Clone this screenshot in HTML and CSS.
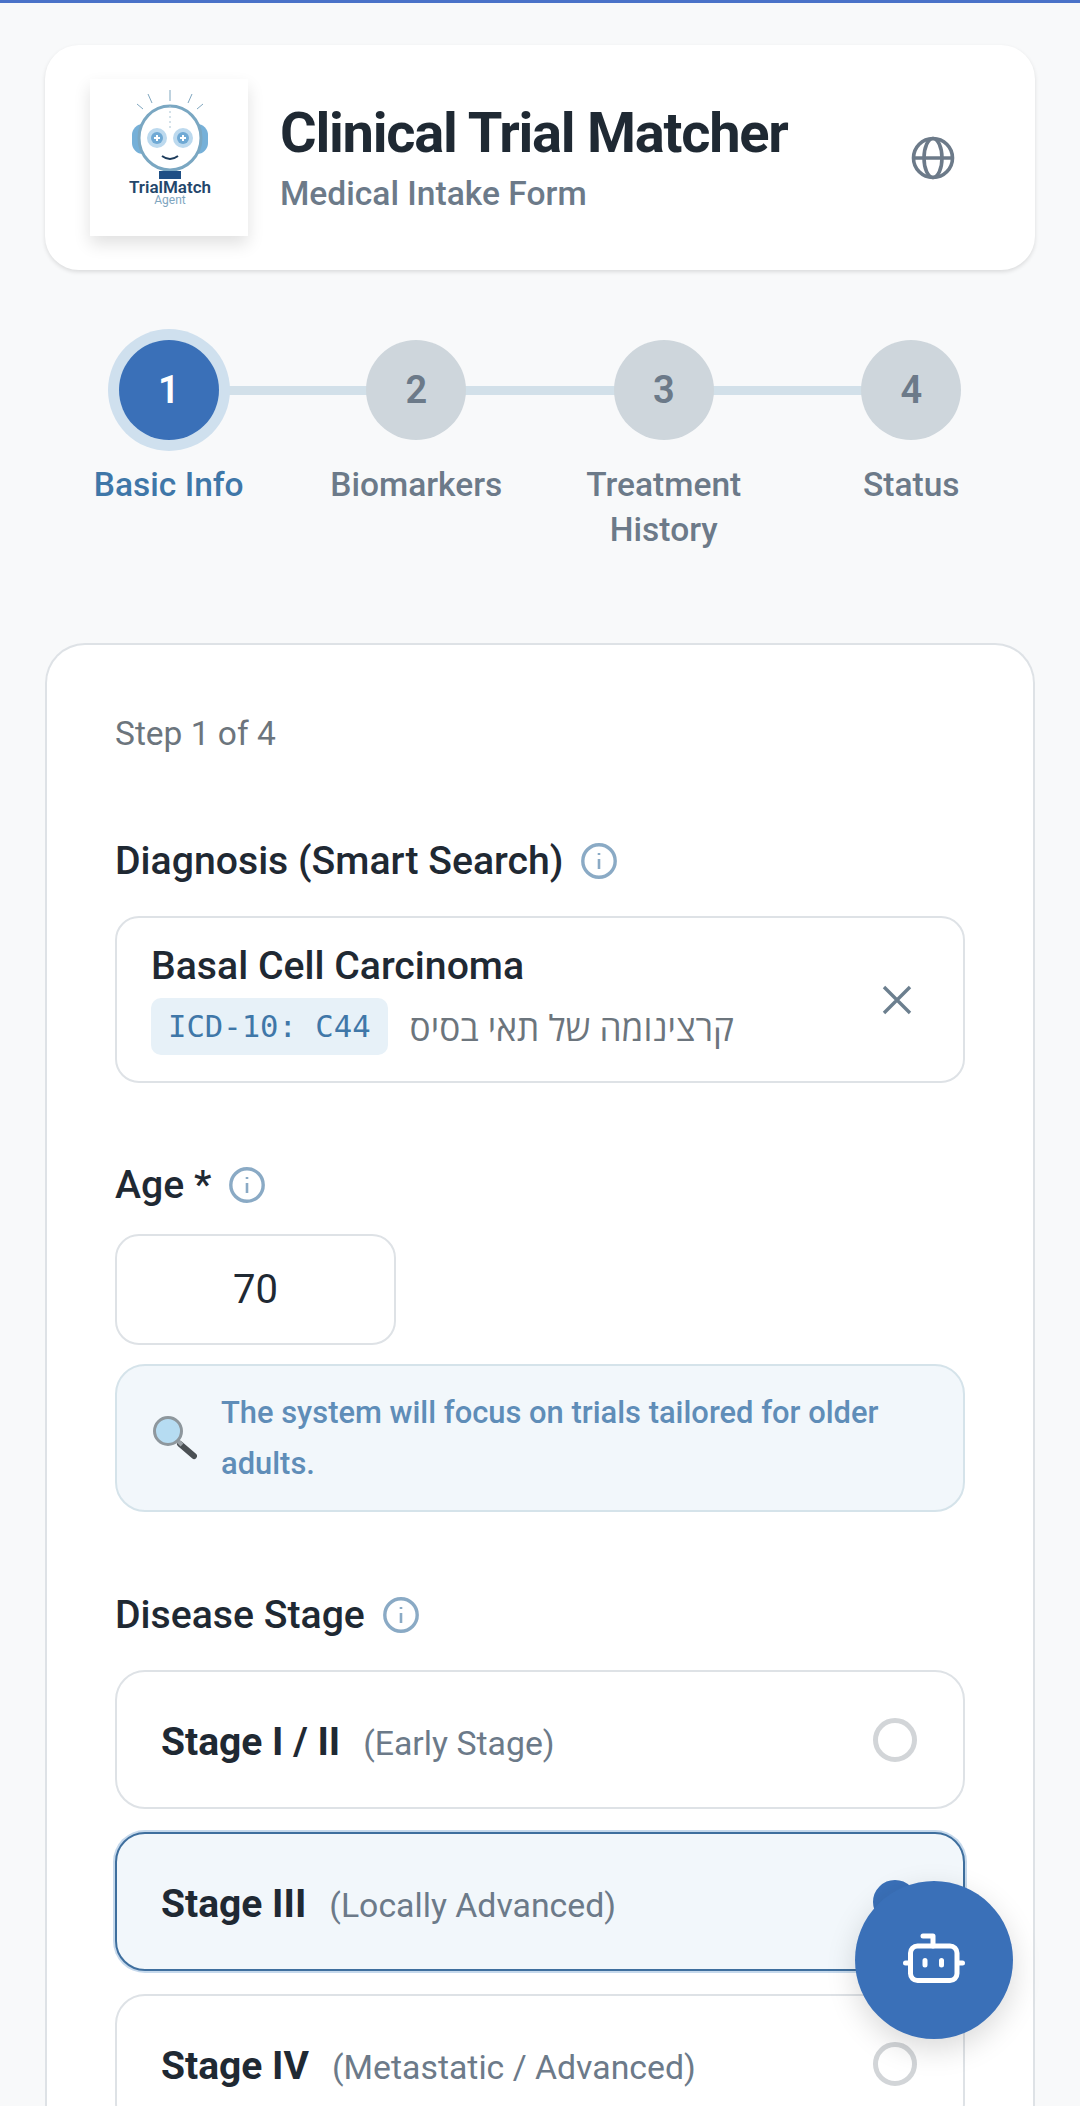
FILE: index.html
```html
<!DOCTYPE html>
<html lang="en">
<head>
    <meta charset="UTF-8">
    <meta name="viewport" content="width=device-width, initial-scale=1.0">
    <title>Clinical Trial Matcher</title>
    <link rel="stylesheet" href="styles.css">
</head>
<body>
    <header class="top-card">
        <div class="logo">
            <svg width="158" height="157" viewBox="0 0 158 157">
                <g stroke="#7fa6bf" stroke-width="1" fill="none">
                    <path d="M80 11V22M58 15L62 24M102 15L98 24M47 25L53 30M113 25L107 30"/>
                </g>
                <rect x="42" y="45" width="76" height="30" rx="11" fill="#76b0d8"/>
                <ellipse cx="80" cy="59" rx="31" ry="32" fill="#fff" stroke="#7aa7c2" stroke-width="3"/>
                <path d="M80 27V50" stroke="#a9c4d4" stroke-width="1" stroke-dasharray="2 3"/>
                <circle cx="67" cy="59" r="10" fill="#bcd9ee"/>
                <circle cx="93" cy="59" r="10" fill="#bcd9ee"/>
                <circle cx="67" cy="59" r="6" fill="#6fa9d4"/>
                <circle cx="93" cy="59" r="6" fill="#6fa9d4"/>
                <path d="M64 59H70M67 56V62M90 59H96M93 56V62" stroke="#fff" stroke-width="2"/>
                <path d="M72 77Q80 83 88 77" stroke="#1d3c5c" stroke-width="2" fill="none"/>
                <rect x="69" y="92" width="22" height="8" fill="#1f4f85"/>
                <text x="80" y="114" class="logo-name" text-anchor="middle">TrialMatch</text>
                <text x="80" y="125" class="logo-sub" text-anchor="middle">Agent</text>
            </svg>
        </div>
        <div class="top-text">
            <h1>Clinical Trial Matcher</h1>
            <p>Medical Intake Form</p>
        </div>
        <svg class="globe" width="44" height="44" viewBox="0 0 44 44" fill="none" stroke="#6c7a89" stroke-width="3.6">
            <circle cx="22" cy="22" r="19.5"/>
            <ellipse cx="22" cy="22" rx="9" ry="19.5"/>
            <path d="M3 22H41"/>
        </svg>
    </header>

    <div class="stepper">
        <div class="step active"><div class="step-num">1</div><div class="step-label">Basic Info</div></div>
        <div class="step"><div class="step-num">2</div><div class="step-label">Biomarkers</div></div>
        <div class="step"><div class="step-num">3</div><div class="step-label">Treatment History</div></div>
        <div class="step"><div class="step-num">4</div><div class="step-label">Status</div></div>
    </div>

    <main class="form-card">
        <div class="step-count">Step 1 of 4</div>

        <div class="field-label">
            <span>Diagnosis (Smart Search)</span>
            <svg class="info" width="36" height="36" viewBox="0 0 36 36" fill="none" stroke="#8aaac5" stroke-width="3.4"><circle cx="18" cy="18" r="16.2"/><path d="M18 16V26M18 10V12" stroke-width="2.6"/></svg>
        </div>
        <div class="selected-box">
            <div class="selected-text">
                <div class="selected-name">Basal Cell Carcinoma</div>
                <div class="selected-meta">
                    <span class="code-chip">ICD-10: C44</span>
                    <span class="hebrew" dir="rtl" lang="he">קרצינומה של תאי בסיס</span>
                </div>
            </div>
            <svg width="32" height="32" viewBox="0 0 32 32" stroke="#6c7f8f" stroke-width="3.4" fill="none"><path d="M3 3L29 29M29 3L3 29"/></svg>
        </div>

        <div class="field-label age-label">
            <span>Age *</span>
            <svg class="info" width="36" height="36" viewBox="0 0 36 36" fill="none" stroke="#8aaac5" stroke-width="3.4"><circle cx="18" cy="18" r="16.2"/><path d="M18 16V26M18 10V12" stroke-width="2.6"/></svg>
        </div>
        <div class="age-input">70</div>
        <div class="note-box">
            <svg class="note-icon" width="44" height="44" viewBox="0 0 44 44">
                <path d="M27 28L41 40" stroke="#4b5054" stroke-width="6" stroke-linecap="round"/>
                <path d="M24 24L29 29" stroke="#9aa1a6" stroke-width="4"/>
                <circle cx="15" cy="15" r="13.5" fill="#b6dcf2" stroke="#8e979d" stroke-width="3"/>
            </svg>
            <p>The system will focus on trials tailored for older adults.</p>
        </div>

        <div class="field-label stage-label">
            <span>Disease Stage</span>
            <svg class="info" width="36" height="36" viewBox="0 0 36 36" fill="none" stroke="#8aaac5" stroke-width="3.4"><circle cx="18" cy="18" r="16.2"/><path d="M18 16V26M18 10V12" stroke-width="2.6"/></svg>
        </div>
        <div class="stage-list">
            <div class="stage-option">
                <div class="stage-text"><b>Stage I / II</b><span>(Early Stage)</span></div>
                <div class="radio"></div>
            </div>
            <div class="stage-option selected">
                <div class="stage-text"><b>Stage III</b><span>(Locally Advanced)</span></div>
                <div class="radio"></div>
            </div>
            <div class="stage-option">
                <div class="stage-text"><b>Stage IV</b><span>(Metastatic / Advanced)</span></div>
                <div class="radio"></div>
            </div>
        </div>
    </main>

    <button class="chat-fab">
        <svg width="62" height="52" viewBox="0 0 62 52" fill="none" stroke="#fff" stroke-width="5" stroke-linecap="round" stroke-linejoin="round">
            <rect x="7.5" y="13" width="46.5" height="34.5" rx="7"/>
            <path d="M30 13V3H20M2.5 30H6M55.5 30H59.5M22 27.5V32M38.5 27.5V32"/>
        </svg>
    </button>
</body>
</html>
```

FILE: styles.css
```css
html, body {
    height: 2106px;
    overflow: hidden;
}

body {
    margin: 0;
    padding: 45px 45px 0;
    box-sizing: border-box;
    background-color: #f8f9fa;
    border-top: 3px solid #4a72c8;
    font-family: Roboto, "Open Sans", sans-serif;
    color: #1f2933;
}

.top-card {
    display: flex;
    align-items: center;
    height: 225px;
    margin-top: -3px;
    padding: 0 80px 0 45px;
    box-sizing: border-box;
    background-color: #fff;
    border-radius: 34px;
    box-shadow: 0 2px 4px rgba(0, 0, 0, 0.12);
}

.logo {
    width: 158px;
    height: 157px;
    flex: none;
    background-color: #fff;
    box-shadow: 0 8px 16px rgba(0, 0, 0, 0.12);
}

.logo-name {
    font-size: 17px;
    font-weight: 600;
    fill: #23466b;
}

.logo-sub {
    font-size: 12px;
    fill: #7fa6bf;
}

.top-text {
    flex: 1;
    margin-left: 32px;
}

.top-text h1 {
    margin: 0;
    font-size: 56px;
    font-weight: 700;
    letter-spacing: -1.25px;
    line-height: 64px;
}

.top-text p {
    margin: 9px 0 0;
    font-size: 33.6px;
    font-weight: 500;
    line-height: 40px;
    color: #6c7a89;
}

.stepper {
    display: flex;
    margin-top: 70px;
}

.step {
    position: relative;
    flex: 1;
    display: flex;
    flex-direction: column;
    align-items: center;
}

.step:not(:last-child)::after {
    content: "";
    position: absolute;
    top: 46px;
    left: 50%;
    width: 100%;
    height: 9px;
    background-color: #d2e0e9;
}

.step-num {
    position: relative;
    z-index: 1;
    width: 100px;
    height: 100px;
    border-radius: 50%;
    background-color: #ced6dc;
    color: #6c7a89;
    font-size: 38px;
    font-weight: 600;
    line-height: 100px;
    text-align: center;
}

.step-label {
    margin-top: 22px;
    width: 200px;
    font-size: 33.5px;
    font-weight: 500;
    line-height: 45px;
    text-align: center;
    color: #6c7a89;
}

.step.active .step-num {
    background-color: #3a70b8;
    color: #fff;
    box-shadow: 0 0 0 11px #cfe0ee;
}

.step.active .step-label {
    color: #3f77a8;
}

/* runs past the bottom of the window, so no bottom border */
.form-card {
    margin-top: 91px;
    padding: 68px 68px 0;
    height: 1396px;
    background-color: #fff;
    border: 2px solid #dee2e6;
    border-bottom: none;
    border-radius: 40px 40px 0 0;
    overflow: hidden;
}

.step-count {
    font-size: 33.5px;
    line-height: 42px;
    color: #6c757d;
}

.field-label {
    display: flex;
    align-items: center;
    gap: 18px;
    margin-top: 84px;
    font-size: 39.2px;
    font-weight: 500;
    line-height: 44px;
}

.selected-box {
    display: flex;
    align-items: center;
    justify-content: space-between;
    height: 167px;
    margin-top: 33px;
    padding: 0 50px 0 34px;
    box-sizing: border-box;
    border: 2px solid #dee2e6;
    border-radius: 24px;
}

.selected-name {
    font-size: 39.2px;
    font-weight: 500;
    line-height: 44px;
}

.selected-meta {
    display: flex;
    align-items: center;
    gap: 22px;
    margin-top: 10px;
}

.code-chip {
    padding: 0 17px;
    height: 57px;
    line-height: 57px;
    border-radius: 10px;
    background-color: #e7f1f8;
    color: #3f77a8;
    font-family: "DejaVu Sans Mono", monospace;
    font-size: 30.6px;
}

.hebrew {
    font-family: "Open Sans", "Noto Sans", "DejaVu Sans", sans-serif;
    font-size: 35.2px;
    color: #6c757d;
}

.age-label {
    margin-top: 80px;
}

.age-input {
    width: 281px;
    height: 111px;
    margin-top: 27px;
    box-sizing: border-box;
    border: 2px solid #dee2e6;
    border-radius: 24px;
    font-size: 40px;
    line-height: 107px;
    text-align: center;
}

.note-box {
    display: flex;
    align-items: center;
    gap: 24px;
    height: 148px;
    margin-top: 19px;
    padding: 0 50px 0 36px;
    box-sizing: border-box;
    background-color: #f2f7fb;
    border: 2px solid #d5e3ea;
    border-radius: 30px;
}

.note-box p {
    margin: 0;
    font-size: 30.9px;
    font-weight: 500;
    line-height: 51px;
    color: #5f8db8;
}

.note-icon {
    flex: none;
}

.stage-label {
    margin-top: 81px;
}

.stage-list {
    display: flex;
    flex-direction: column;
    gap: 23px;
    margin-top: 33px;
}

.stage-option {
    display: flex;
    align-items: center;
    justify-content: space-between;
    flex: none;
    height: 139px;
    padding: 0 46px 0 44px;
    box-sizing: border-box;
    border: 2px solid #dee2e6;
    border-radius: 30px;
}

.stage-text {
    padding-top: 4px;
}

.stage-option b {
    font-size: 39px;
    font-weight: 700;
}

.stage-option span {
    margin-left: 23px;
    font-size: 33.8px;
    color: #6c7a89;
}

.stage-option.selected {
    background-color: #f2f7fb;
    border-color: #3f6f9e;
    box-shadow: 0 0 0 2px #c6d9ec;
}

.radio {
    width: 44px;
    height: 44px;
    box-sizing: border-box;
    border: 5px solid #d2d5d8;
    border-radius: 50%;
}

.stage-option.selected .radio {
    border-color: #3a70b8;
    background-color: #3a70b8;
}

.chat-fab {
    position: fixed;
    left: 855px;
    top: 1881px;
    width: 158px;
    height: 158px;
    padding: 0;
    border: none;
    border-radius: 50%;
    background-color: #3a70b8;
    box-shadow: 0 10px 30px rgba(0, 0, 0, 0.15);
}
```
